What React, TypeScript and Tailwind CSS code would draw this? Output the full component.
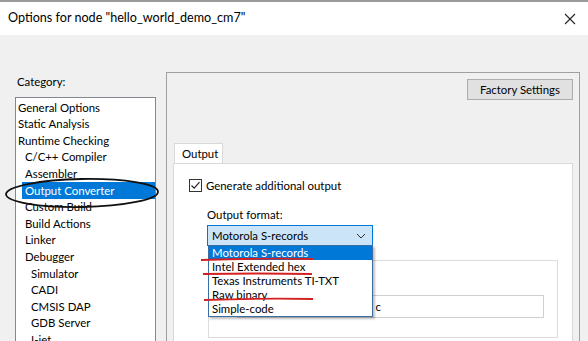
import React from "react";

const items: { label: string; level: number; selected?: boolean }[] = [
  { label: "General Options", level: 0 },
  { label: "Static Analysis", level: 0 },
  { label: "Runtime Checking", level: 0 },
  { label: "C/C++ Compiler", level: 1 },
  { label: "Assembler", level: 1 },
  { label: "Output Converter", level: 1, selected: true },
  { label: "Custom Build", level: 1 },
  { label: "Build Actions", level: 1 },
  { label: "Linker", level: 1 },
  { label: "Debugger", level: 1 },
  { label: "Simulator", level: 2 },
  { label: "CADI", level: 2 },
  { label: "CMSIS DAP", level: 2 },
  { label: "GDB Server", level: 2 },
  { label: "I-jet", level: 2 },
];

const formats = [
  "Motorola S-records",
  "Intel Extended hex",
  "Texas Instruments TI-TXT",
  "Raw binary",
  "Simple-code",
];

export default function App() {
  return (
    <div
      className="relative w-[588px] h-[341px] overflow-hidden bg-[#f0f0f0] text-[#000] border-t-2 border-[#9a9a9a]"
      style={{ fontFamily: 'Lato, "Noto Sans", sans-serif' }}
    >
      {/* Title bar */}
      <div className="h-[33px] bg-white flex items-center justify-between pl-[8px] pr-[12px]">
        <span className="text-[12.6px] leading-none">Options for node "hello_world_demo_cm7"</span>
        <svg width="12" height="12" viewBox="0 0 12 12">
          <path d="M1 1L11 11M11 1L1 11" stroke="#222" strokeWidth="1.1" />
        </svg>
      </div>

      {/* Body */}
      <div className="flex">
        {/* Left column */}
        <div className="pl-[15px] pt-[39px] flex flex-col">
          <div className="text-[11.4px] leading-[16px] h-[16px] pl-[2px]">Category:</div>
          <div className="mt-[7px] w-[141px] h-[260px] bg-white border border-[#828790] pt-[1px]">
            {items.map((it) => (
              <div
                key={it.label}
                className={
                  "h-[16.6px] flex items-center text-[11.4px] leading-none " +
                  (it.level === 0 ? "pl-[2px]" : it.level === 1 ? "pl-[6px]" : "pl-[15px]")
                }
              >
                <span
                  className={
                    it.selected
                      ? "bg-[#0078d7] text-white w-full h-full flex items-center pl-[3px]"
                      : it.level === 1
                      ? "pl-[3px]"
                      : ""
                  }
                >
                  {it.label}
                </span>
              </div>
            ))}
          </div>
        </div>

        {/* Right panel */}
        <div className="ml-[10px] mt-[37px] w-[414px] h-[280px] border border-[#a0a0a0] flex flex-col">
          <div className="flex justify-end pt-[6px] pr-[6px]">
            <div className="w-[106px] h-[21px] bg-[#e1e1e1] border border-[#adadad] flex items-center justify-center text-[11.4px]">
              Factory Settings
            </div>
          </div>
          <div className="mt-[43px] pl-[6px] pr-[6px] flex flex-col">
            <div className="flex">
              <div className="ml-[1px] w-[49px] h-[21px] bg-white border border-b-0 border-[#d9d9d9] flex items-center pl-[7px] text-[11.4px]">
                Output
              </div>
            </div>
            <div className="relative h-[200px] bg-white border border-[#d9d9d9] -mt-px pt-[13px] pl-[15px]">
              <div className="flex items-center gap-[4px] text-[11.4px]">
                <div className="w-[13px] h-[13px] border border-[#333] flex items-center justify-center">
                  <svg width="11" height="11" viewBox="0 0 11 11">
                    <path d="M1.5 5.5L4.2 8.2L9.5 2.2" stroke="#222" strokeWidth="1.2" fill="none" />
                  </svg>
                </div>
                <span>Generate additional output</span>
              </div>
              <div className="mt-[13px] ml-[18px] text-[11.4px] leading-[16px]">Output format:</div>
              <div className="mt-[2px] ml-[18px] w-[166px] h-[21px] bg-[#cce4f7] border border-[#0078d7] flex items-center justify-between pl-[4px] pr-[6px] text-[11.4px]">
                <span>Motorola S-records</span>
                <svg width="10" height="6" viewBox="0 0 10 6">
                  <path d="M1 1L5 5L9 1" stroke="#333" strokeWidth="1" fill="none" />
                </svg>
              </div>
              {/* group box behind */}
              <div className="mt-[14px] ml-[19px] w-[350px] h-[78px] border border-[#dcdcdc] pt-[34px] pl-[28px]">
                <div className="w-[307px] h-[23px] border border-[#d0d0d0] flex items-center justify-end pr-[162px] text-[11.4px]">
                  c
                </div>
              </div>
            </div>
          </div>
        </div>
      </div>

      {/* Dropdown list overlay */}
      <div className="absolute left-[208px] top-[243px] w-[165px] h-[72px] bg-white border border-[#3b6ea5] shadow-[2px_2px_2px_rgba(0,0,0,0.25)] text-[11.4px]">
        {formats.map((f, i) => (
          <div
            key={f}
            className={
              "h-[14px] leading-[14px] pl-[3px] " + (i === 0 ? "bg-[#0078d7] text-white" : "")
            }
          >
            {f}
          </div>
        ))}
      </div>

      {/* Annotations */}
      <svg className="absolute left-0 top-0 pointer-events-none" width="588" height="341">
        <ellipse cx="82" cy="191" rx="76" ry="14" fill="none" stroke="#111" strokeWidth="1.8" transform="rotate(-1 82 191)" />
        <path d="M201 258 Q 260 256 313 257" stroke="#d42020" strokeWidth="1.8" fill="none" />
        <path d="M203 272 Q 260 271 312 272" stroke="#d42020" strokeWidth="1.8" fill="none" />
        <path d="M204 298 Q 260 296 313 297" stroke="#d42020" strokeWidth="1.8" fill="none" />
      </svg>
    </div>
  );
}
